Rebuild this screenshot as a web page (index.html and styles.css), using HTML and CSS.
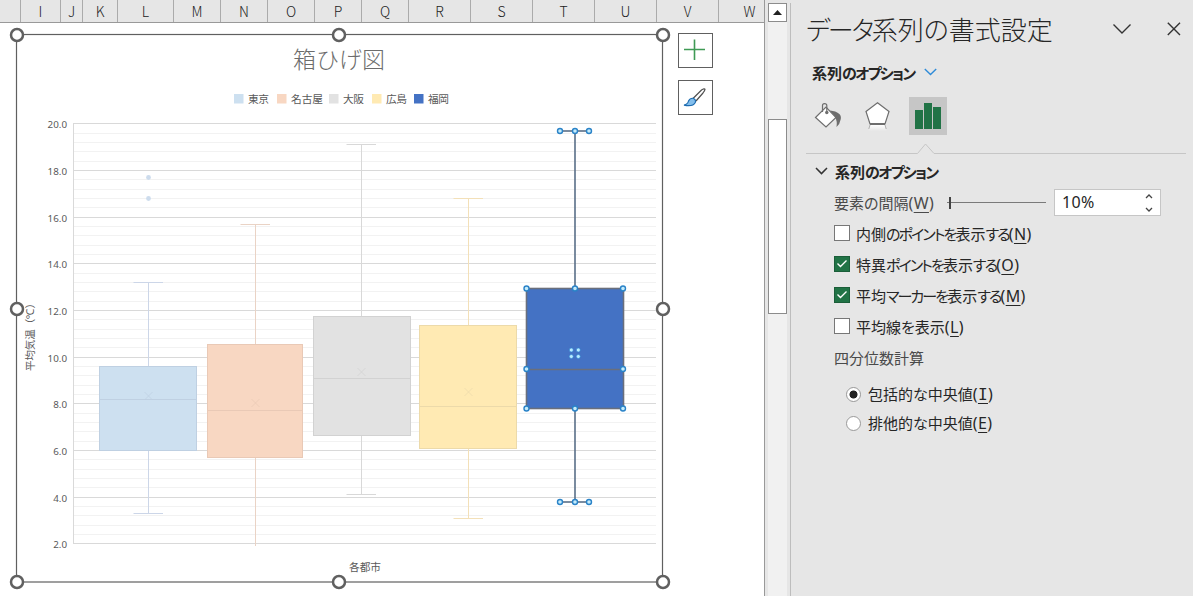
FILE: index.html
```html
<!DOCTYPE html>
<html lang="ja">
<head>
<meta charset="UTF-8">
<meta name="viewport" content="width=device-width, initial-scale=1">
<title>箱ひげ図</title>
<link rel="stylesheet" href="styles.css">
</head>
<body>

<main class="sheet">
  <div class="columns" id="columns"></div>
  <div class="cells">
    <svg class="chart" id="chart" width="672" height="573" viewBox="0 23 672 573" role="img" aria-label="箱ひげ図">
      <rect class="frame" x="16.5" y="34.5" width="646" height="547.5" />
      <text class="chart-title" x="293" y="68" textLength="92">箱ひげ図</text>
      <g id="legend"></g>
      <g id="grid"></g>
      <g id="series"></g>
      <g id="handles"></g>
      <text class="axis-title" x="349" y="571" textLength="32">各都市</text>
      <text class="axis-title rotated" transform="translate(34 371) rotate(-90)" textLength="73">平均気温（℃）</text>
    </svg>
    <div class="chart-buttons">
      <button class="chart-button" aria-label="グラフ要素">
        <svg width="33" height="33" viewBox="0 0 33 33"><path d="M5 15.5H26M15.5 5.5V26" stroke="#3f9a55" stroke-width="1.6" /></svg>
      </button>
      <button class="chart-button" aria-label="グラフ スタイル">
        <svg width="33" height="33" viewBox="0 0 33 33">
          <path d="M14 17.5L22.5 9Q25.5 7 26 8.3Q26 9.5 24 12L17 20" fill="#fff" stroke="#505050" stroke-width="1.2" />
          <path d="M5 24.2Q9 23 9.5 20Q11 17 14.2 17.3Q17.3 18.8 16.3 21.5Q14 26 5 24.2Z" fill="#83beec" stroke="#1e6cb0" stroke-width="1.2" />
        </svg>
      </button>
    </div>
  </div>
</main>

<div class="scrollbar">
  <div class="scroll-up"><svg width="17" height="17" viewBox="0 0 17 17"><path d="M4 11L8.5 6L13 11Z" fill="#222" /></svg></div>
  <div class="track"><div class="thumb"></div></div>
</div>

<aside class="pane">
  <header class="pane-header">
    <h1><span class="kana">データ</span>系列の書式設定</h1>
    <svg class="pane-menu" width="18" height="12" viewBox="0 0 18 12"><path d="M.5 1.500L9 10L17.500 1.500" /></svg>
    <svg class="pane-close" width="14" height="14" viewBox="0 0 14 14"><path d="M.8 .8L13 13M13 .8L.8 13" /></svg>
  </header>

  <div class="target">
    <span class="bold">系列<span class="kana">のオプション</span></span>
    <svg width="13" height="8" viewBox="0 0 13 8"><path d="M.8 1L6.5 6.6L12.2 1" /></svg>
  </div>

  <nav class="tabs">
    <div class="tab">
      <svg width="38" height="38" viewBox="0 0 38 38">
        <path d="M21 13.5Q33 15 31.8 22Q31 27 27.5 30Q28.5 24 26 20Z" fill="#6e6e6e" />
        <path d="M6.5 20.5L17 10L27 20.5L17 30Z" fill="#fff" stroke="#6e6e6e" stroke-width="1.2" />
        <path d="M13.5 15V8.5Q13.5 6.6 15.5 6.6Q17.8 6.6 17.8 8.5V15" fill="none" stroke="#6e6e6e" stroke-width="1.2" />
        <circle cx="17.8" cy="15.5" r="1.7" fill="#6e6e6e" />
      </svg>
    </div>
    <div class="tab">
      <svg width="38" height="38" viewBox="1 0 38 38">
        <path d="M12 28L10.5 34H28.5L27 28Z" fill="url(#fade)" />
        <path d="M12 28L10.8 32M27 28L28.2 32" stroke="#b0b0b0" />
        <path d="M19.5 5.8L31 14.5L27 27H12L8 14.5Z" fill="#fff" stroke="#6e6e6e" stroke-width="1.2" />
        <path d="M12 27H27" stroke="#6e6e6e" stroke-width="2" />
        <defs><linearGradient id="fade" x2="0" y2="1"><stop stop-color="#fff" /><stop offset="1" stop-color="#e6e6e6" /></linearGradient></defs>
      </svg>
    </div>
    <div class="tab selected">
      <svg width="38" height="38" viewBox="0 0 38 38"><path d="M6 13H14V32H6ZM15 6H23V32H15ZM24 10H32V32H24Z" fill="#217346" /></svg>
    </div>
  </nav>
  <svg class="divider" width="380" height="12" viewBox="0 0 380 12"><path d="M0 10.5H111.5L119.5 1L128 10.5H380" /></svg>

  <section class="options">
    <div class="section-title">
      <svg width="13" height="8" viewBox="0 0 13 8"><path d="M1 1L6.5 6.6L12 1" /></svg>
      <span class="bold">系列<span class="kana">のオプション</span></span>
    </div>
    <div class="gap-row">
      <span class="label">要素の間隔<span class="key">(<u>W</u>)</span></span>
      <div class="slider"><i></i></div>
      <div class="spinner">
        <span>10%</span>
        <svg width="8" height="18" viewBox="0 0 8 18"><path d="M1 4L4 1L7 4M1 14L4 17L7 14" /></svg>
      </div>
    </div>
    <div class="check"><i class="box"></i><span>内側<span class="kana">のポイントを</span>表示<span class="kana">する</span><span class="key">(<u>N</u>)</span></span></div>
    <div class="check"><i class="box on"><svg width="16" height="16" viewBox="0 0 16 16"><path d="M3.5 7.5L6.5 10.5L12.5 4.500" /></svg></i><span>特異<span class="kana">ポイントを</span>表示<span class="kana">する</span><span class="key">(<u>O</u>)</span></span></div>
    <div class="check"><i class="box on"><svg width="16" height="16" viewBox="0 0 16 16"><path d="M3.5 7.5L6.5 10.5L12.5 4.500" /></svg></i><span>平均<span class="kana">マーカーを</span>表示<span class="kana">する</span><span class="key">(<u>M</u>)</span></span></div>
    <div class="check"><i class="box"></i><span>平均線を表示<span class="key">(<u>L</u>)</span></span></div>
    <div class="group-label">四分位数計算</div>
    <div class="radio"><i class="dot on"></i><span>包括的な中央値<span class="key">(<u class="serif-i">I</u>)</span></span></div>
    <div class="radio"><i class="dot"></i><span>排他的な中央値<span class="key">(<u>E</u>)</span></span></div>
  </section>
</aside>

<script src="chart.js"></script>
</body>
</html>
```
FILE: styles.css
```css
* {
  box-sizing: border-box;
}
body {
  margin: 0;
  height: 596px;
  display: flex;
  overflow: hidden;
  background: #e6e6e6;
  color: #262626;
  font-family: "Noto Sans", "Noto Sans CJK JP", sans-serif;
}
svg {
  display: block;
  flex: none;
}

/* worksheet */
.sheet {
  width: 765px;
  flex: none;
  border-right: 1px solid #999;
  background: #fff;
}
.columns {
  height: 23px;
  display: flex;
  overflow: hidden;
  background: #e6e6e6;
  border-bottom: 1px solid #999;
}
.column {
  flex: none;
  border-right: 1px solid #ababab;
  text-align: center;
  font: 300 14px/22px "Noto Sans CJK JP", sans-serif;
  color: #222;
}
.cells {
  display: flex;
}
.chart-buttons {
  display: flex;
  flex-direction: column;
  gap: 12px;
  padding: 10px 0 0 6px;
}
.chart-button {
  width: 35px;
  height: 35px;
  padding: 0;
  background: #fff;
  border: 1px solid #606060;
}

/* chart */
.chart text {
  font-family: "Noto Sans", "Noto Sans CJK JP", sans-serif;
  fill: #595959;
}
.frame {
  fill: #fff;
  stroke: #606060;
  stroke-width: 1.2;
}
.chart .chart-title {
  font-family: "Noto Sans CJK JP", sans-serif;
  font-size: 23px;
  font-weight: 300;
  fill: #6c6c6c;
}
.chart .legend-text,
.chart .axis-title {
  font-size: 10.7px;
}
.chart .rotated {
  font-size: 10.5px;
}
.chart .tick {
  font-size: 9.8px;
  text-anchor: end;
}
.major {
  stroke: #d9d9d9;
}
.minor {
  stroke: #f2f2f2;
}
.frame-handle {
  fill: #fff;
  stroke: #606060;
  stroke-width: 2.5;
}
.point-handle {
  fill: #c5ecfb;
  stroke: #2a83c8;
  stroke-width: 1.4;
}
.mean-handle {
  fill: #b9ecff;
  stroke: #2a83d0;
  stroke-width: .6;
}

/* scrollbar */
.scrollbar {
  width: 26px;
  flex: none;
  margin-top: 3px;
  padding-left: 3px;
  border-right: 1px solid #bdbdbd;
}
.scroll-up {
  width: 19px;
  height: 19px;
  background: #fff;
  border: 1px solid #8c8c8c;
}
.track {
  width: 19px;
  height: 574px;
  padding-top: 97px;
  background: #f1f1f1;
}
.thumb {
  height: 195px;
  background: #fff;
  border: 1px solid #8c8c8c;
}

/* format pane */
.pane {
  flex: 1;
  padding-left: 15px;
}
.pane-header {
  height: 57px;
  display: flex;
  align-items: center;
}
h1 {
  width: 307px;
  margin: 0;
  font: 300 26px/57px "Noto Sans CJK JP", sans-serif;
  font-feature-settings: "palt";
  white-space: nowrap;
}
h1 .kana {
  letter-spacing: -2.3px;
}
.pane-menu,
.pane-close {
  fill: none;
  stroke: #333;
  stroke-width: 1.4;
}
.pane-close {
  margin-left: 36px;
}
.kana {
  letter-spacing: -1.9px;
}
.bold {
  font-size: 15px;
  font-weight: 700;
  font-feature-settings: "palt";
  white-space: nowrap;
}
.bold .kana {
  letter-spacing: -1.7px;
}
.target {
  height: 30px;
  padding-left: 6px;
  display: flex;
  align-items: center;
}
.target .bold {
  width: 112px;
}
.target svg {
  fill: none;
  stroke: #2e8bd8;
  stroke-width: 1.4;
}
.tabs {
  display: flex;
  gap: 12px;
  padding: 10px 0 0 3px;
}
.tab {
  width: 38px;
  height: 38px;
}
.tab.selected {
  background: #c6c6c6;
}
.divider {
  margin-top: 8px;
  fill: none;
  stroke: #c6c6c6;
}
.options {
  font-size: 15px;
  font-feature-settings: "palt";
}
.section-title {
  height: 32px;
  display: flex;
  align-items: center;
  gap: 7px;
  padding-left: 9px;
}
.section-title svg {
  fill: none;
  stroke: #333;
  stroke-width: 1.5;
}
.gap-row {
  height: 31px;
  display: flex;
  align-items: center;
  padding-left: 28px;
}
.label {
  width: 113px;
  color: #4a4a4a;
  white-space: nowrap;
}
.key {
  font-size: 16px;
  line-height: 1;
  letter-spacing: .4px;
}
.serif-i {
  font-family: "DejaVu Sans Mono", monospace;
}
.slider {
  width: 99px;
  height: 13px;
  display: flex;
  align-items: center;
  background: linear-gradient(#7a7a7a, #7a7a7a) 0 6px / 99px 1px no-repeat;
}
.slider i {
  width: 2px;
  height: 12px;
  margin-left: 2px;
  background: #444;
}
.spinner {
  width: 107px;
  height: 27px;
  margin-left: 8px;
  padding: 0 7px;
  display: flex;
  align-items: center;
  justify-content: space-between;
  background: #fff;
  border: 1px solid #c6c6c6;
}
.spinner span {
  font-size: 16px;
  line-height: 22px;
  margin-top: -2px;
  letter-spacing: .3px;
}
.spinner svg {
  fill: none;
  stroke: #444;
  stroke-width: 1.3;
}
u {
  text-decoration-thickness: 1px;
  text-underline-offset: 3px;
}
.check {
  height: 31px;
  display: flex;
  align-items: center;
  gap: 6px;
  padding-left: 28px;
  white-space: nowrap;
}
.box {
  width: 16px;
  height: 16px;
  margin-bottom: 1px;
  background: #fff;
  border: 1px solid #777;
}
.box.on {
  background: #217346;
  border-color: #1b5e39;
}
.box svg {
  margin: -1px;
  fill: none;
  stroke: #fff;
  stroke-width: 1.4;
}
.group-label {
  padding-left: 28px;
  line-height: 33px;
  color: #4a4a4a;
}
.radio {
  height: 29px;
  display: flex;
  align-items: center;
  gap: 7px;
  padding-left: 40px;
}
.radio > span {
  margin-top: -2px;
}
.group-label + .radio {
  margin-top: 5px;
}
.dot {
  width: 15px;
  height: 15px;
  background: #fff;
  border: 1px solid #999;
  border-radius: 50%;
}
.dot.on {
  background: radial-gradient(circle, #222 3.6px, #fff 4.4px);
}
```
FILE: chart.js
```js
const svgNS = "http://www.w3.org/2000/svg";

function add(parentId, tag, attrs, text) {
  const el = document.createElementNS(svgNS, tag);
  for (const key in attrs) el.setAttribute(key, attrs[key]);
  if (text) el.textContent = text;
  document.getElementById(parentId).appendChild(el);
}

// Worksheet column headers, [letter, width]
const columns = [['', 21], ['I', 40], ['J', 22], ['K', 35], ['L', 56], ['M', 47], ['N', 47], ['O', 47],
  ['P', 47], ['Q', 47], ['R', 62], ['S', 62], ['T', 62], ['U', 62], ['V', 62], ['W', 62]];
columns.forEach(([letter, width]) => {
  const div = document.createElement('div');
  div.className = 'column';
  div.style.width = width + 'px';
  div.textContent = letter;
  document.getElementById('columns').appendChild(div);
});

// Legend, [name, swatch x, text width, color]
[['東京', 234, 21, '#cde0f0'], ['名古屋', 277, 32, '#f8d7c2'], ['大阪', 329, 21, '#e2e2e2'],
  ['広島', 372, 21, '#ffeab3'], ['福岡', 414, 21, '#4472c4']].forEach(([name, x, width, color]) => {
  add('legend', 'rect', { x, y: 94, width: 9.5, height: 9.5, fill: color });
  add('legend', 'text', { x: x + 14, y: 103, textLength: width, class: 'legend-text' }, name);
});

// Gridlines every 0.4, labelled every 2.0
const top20 = 123.4;
const unit = 420 / 18;
for (let i = 0; i <= 45; i++) {
  const y = Math.round(top20 + i * 0.4 * unit) + 0.5;
  const major = i % 5 === 0;
  add('grid', 'line', { x1: 73, x2: 656, y1: y, y2: y, class: major ? 'major' : 'minor' });
  if (major) add('grid', 'text', { x: 67, y: y + 4.5, class: 'tick' }, (20 - i * 0.4).toFixed(1));
}
add('grid', 'line', { x1: 73.5, x2: 73.5, y1: 123, y2: 544, class: 'major' });

// Boxes in chart coordinates
const boxes = [
  { x: 99, w: 98, cx: 148.5, high: 282.5, q3: 366, med: 399.5, q1: 451, low: 513.5, mean: 396, fill: '#cde0f0', line: '#bfd0e2', whisker: '#ccd6e8' },
  { x: 207, w: 96, cx: 255.5, high: 224.5, q3: 344, med: 410.5, q1: 458, low: 546, mean: 403, fill: '#f8d7c2', line: '#e9c9b6', whisker: '#ead3c5', noLowCap: true },
  { x: 313, w: 98, cx: 361.5, high: 144.5, q3: 316, med: 378.5, q1: 436, low: 494.5, mean: 372, fill: '#e2e2e2', line: '#d2d2d2', whisker: '#d8d8d8' },
  { x: 419, w: 98, cx: 468.5, high: 198.5, q3: 325, med: 406.5, q1: 449, low: 518.5, mean: 392, fill: '#ffeab3', line: '#ecdaaa', whisker: '#f3e0b8' },
  { x: 526, w: 98, cx: 575, high: 131, q3: 288, med: 369.5, q1: 409, low: 502, fill: '#4472c4', line: '#6a6f7c', whisker: '#596f88', selected: true }
];
boxes.forEach(b => {
  const sw = b.selected ? 1.6 : 1;
  const line = (x1, y1, x2, y2, stroke) => add('series', 'line', { x1, y1, x2, y2, stroke, 'stroke-width': sw });
  line(b.cx, b.high, b.cx, b.q3, b.whisker);
  line(b.cx, b.q1, b.cx, b.low, b.whisker);
  line(b.cx - 15, b.high, b.cx + 14.5, b.high, b.whisker);
  if (!b.noLowCap) line(b.cx - 15, b.low, b.cx + 14.5, b.low, b.whisker);
  add('series', 'rect', { x: b.x + 0.5, y: b.q3 + 0.5, width: b.w - 1, height: b.q1 - b.q3 - 1, fill: b.fill, stroke: b.line, 'stroke-width': sw });
  line(b.x, b.med, b.x + b.w, b.med, b.line);
  if (b.mean) {
    add('series', 'path', { d: `M${b.cx - 4} ${b.mean - 4}l8 8m0 -8l-8 8`, stroke: b.line, 'stroke-width': 0.7 });
  }
});
[177.5, 198.5].forEach(cy => add('series', 'circle', { cx: 148.5, cy, r: 2.4, fill: '#cddced' }));

// Selection handles
[17, 339, 663].forEach(cx => [35, 309, 582].forEach(cy => {
  if (cx !== 339 || cy !== 309) add('handles', 'circle', { cx, cy, r: 6, class: 'frame-handle' });
}));
[[560, 131], [575, 131], [589, 131], [526.5, 288.5], [575, 288.5], [623, 288.5], [526.5, 369], [623, 369],
  [526.5, 408.5], [575, 408.5], [623, 408.5], [560, 502], [575, 502], [589, 502]].forEach(([cx, cy]) => {
  add('handles', 'circle', { cx, cy, r: 2.5, class: 'point-handle' });
});
[[571.3, 350], [578.3, 350], [571.3, 356.5], [578.3, 356.5]].forEach(([cx, cy]) => {
  add('handles', 'circle', { cx, cy, r: 2, class: 'mean-handle' });
});
```
